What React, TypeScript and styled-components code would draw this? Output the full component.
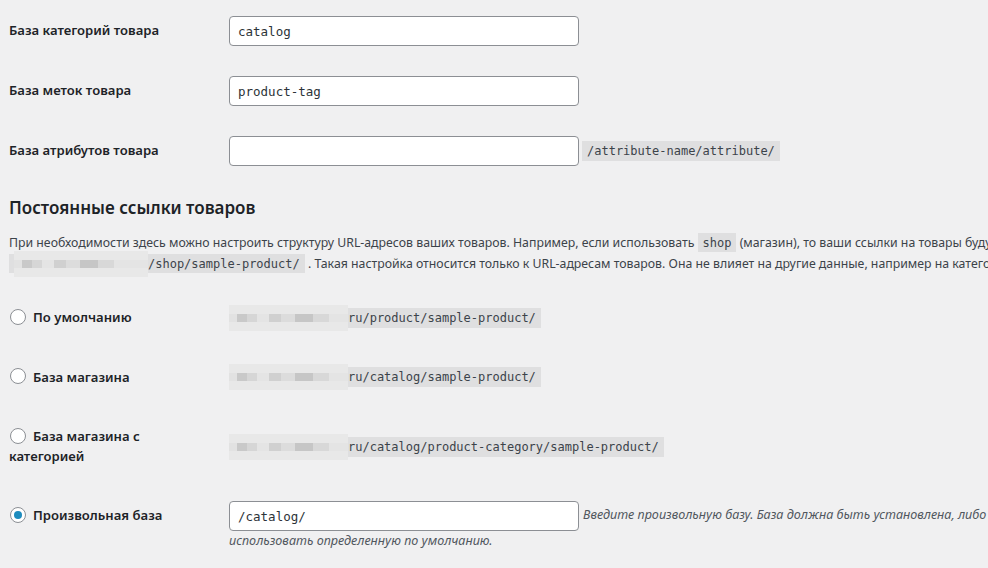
import { createGlobalStyle, styled } from 'styled-components';

const GlobalStyle = createGlobalStyle`
  html, body {
    margin: 0;
    background: #f0f0f1;
    overflow: hidden;
  }
  body {
    font-family: "Noto Sans", "Open Sans", sans-serif;
    font-size: 12.3px;
    color: #1d2327;
  }
`;

const mono = `"DejaVu Sans Mono", "Liberation Mono", monospace`;

const Page = styled.div`
  width: 1200px;
  padding: 1px 0 0 9px;
`;

const FormTable = styled.div`
  display: flex;
  flex-direction: column;
`;

const FormRow = styled.div`
  display: grid;
  grid-template-columns: 210px 1fr;
`;

const RowLabel = styled.label`
  padding: 20px 10px 20px 0;
  font-size: 13.1px;
  font-weight: 600;
  line-height: 19.5px;
  color: #1d2327;
`;

const RowField = styled.div`
  padding: 15px 10px;
  display: flex;
  flex-direction: column;
  justify-content: center;
  line-height: 19px;
`;

const TextInput = styled.input`
  box-sizing: border-box;
  width: 350px;
  height: 30px;
  padding: 0 8px;
  border: 1px solid #8c8f94;
  border-radius: 4px;
  background: #fff;
  font-family: ${mono};
  font-size: 12.5px;
  color: #2c3338;
  vertical-align: middle;
  outline: none;
`;

const InlineField = styled.div`
  display: flex;
  align-items: center;
  gap: 3px;
`;

const Code = styled.code`
  font-family: ${mono};
  font-size: 12px;
  line-height: 15px;
  background: rgba(0, 0, 0, 0.07);
  padding: 3px 5px 2px;
  color: #3c434a;
`;

const UrlChip = styled(Code)`
  display: inline-flex;
  align-items: center;
  padding: 3px 5px 2px 0;
  align-self: flex-start;
`;

const Blur = styled.span<{ $w: number }>`
  display: inline-block;
  width: ${({ $w }) => $w}px;
  height: 26px;
  margin: -6px 0 -5px;
  vertical-align: middle;
  background:
    linear-gradient(
      90deg,
      #e2e2e2 0 8px,
      #c9c9c9 8px 18px,
      #d6d6d6 18px 28px,
      #e4e4e4 28px 40px,
      #d0d0d0 40px 52px,
      #dcdcdc 52px 66px,
      #c6c6c6 66px 84px,
      #d8d8d8 84px 100px,
      #e4e4e4 100px
    ) center / 100% 8px no-repeat,
    #e8e8e8;
`;

const Heading = styled.h2`
  margin: 14px 0 11px;
  font-size: 17px;
  line-height: 26px;
  font-weight: 600;
  color: #1d2327;
`;

const Intro = styled.p`
  margin: 0 0 14px;
  line-height: 21px;
  color: #3c434a;
  white-space: nowrap;
`;

const Radio = styled.input.attrs({ type: 'radio' })`
  appearance: none;
  box-sizing: border-box;
  width: 16px;
  height: 16px;
  margin: -3px 7px 0 1px;
  border: 1px solid #8c8f94;
  border-radius: 50%;
  background: #fff;
  vertical-align: middle;
  display: inline-grid;
  place-content: center;
  &:checked::before {
    content: '';
    width: 8px;
    height: 8px;
    border-radius: 50%;
    background: #1e8cbe;
  }
`;

const Description = styled.span`
  font-style: italic;
  font-size: 12.6px;
  color: #50575e;
  margin-left: 4px;
`;

const FieldBlock = styled.div`
  line-height: 19px;
  white-space: nowrap;
`;

const baseRows = [
  { label: 'База категорий товара', value: 'catalog' },
  { label: 'База меток товара', value: 'product-tag' },
  { label: 'База атрибутов товара', value: '', suffix: '/attribute-name/attribute/' },
];

const permalinkRows = [
  { label: 'По умолчанию', path: 'ru/product/sample-product/' },
  { label: 'База магазина', path: 'ru/catalog/sample-product/' },
  { label: 'База магазина с категорией', path: 'ru/catalog/product-category/sample-product/' },
];

export default function App() {
  return (
    <>
      <GlobalStyle />
      <Page>
        <FormTable>
          {baseRows.map((row) => (
            <FormRow key={row.label}>
              <RowLabel>{row.label}</RowLabel>
              <RowField>
                <InlineField>
                  <TextInput readOnly value={row.value} />
                  {row.suffix && <Code>{row.suffix}</Code>}
                </InlineField>
              </RowField>
            </FormRow>
          ))}
        </FormTable>

        <Heading>Постоянные ссылки товаров</Heading>
        <Intro>
          При необходимости здесь можно настроить структуру URL-адресов ваших товаров. Например, если
          использовать <Code>shop</Code> (магазин), то ваши ссылки на товары будут выглядеть как
          <br />
          <Code>
            <Blur $w={134} />
            /shop/sample-product/
          </Code>{' '}
          . Такая настройка относится только к URL-адресам товаров. Она не влияет на другие данные,
          например на категории товаров.
        </Intro>

        <FormTable>
          {permalinkRows.map((row) => (
            <FormRow key={row.label}>
              <RowLabel>
                <Radio name="product_permalink" />
                {row.label}
              </RowLabel>
              <RowField>
                <UrlChip>
                  <Blur $w={119} />
                  {row.path}
                </UrlChip>
              </RowField>
            </FormRow>
          ))}
          <FormRow>
            <RowLabel>
              <Radio name="product_permalink" defaultChecked />
              Произвольная база
            </RowLabel>
            <RowField>
              <FieldBlock>
                <TextInput readOnly value="/catalog/" />
                <Description>
                  Введите произвольную базу. База должна быть установлена, либо WooCommerce будет
                  <br />
                  использовать определенную по умолчанию.
                </Description>
              </FieldBlock>
            </RowField>
          </FormRow>
        </FormTable>
      </Page>
    </>
  );
}
